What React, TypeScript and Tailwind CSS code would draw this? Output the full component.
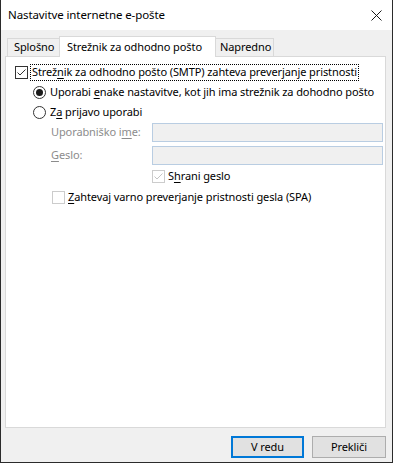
import React from 'react';

const font = { fontFamily: '"Segoe UI", "Noto Sans", sans-serif' };

function CheckBox({ checked, disabled }: { checked?: boolean; disabled?: boolean }) {
  return (
    <span
      className={`flex h-[13px] w-[13px] shrink-0 items-center justify-center border bg-white ${
        disabled ? 'border-[#cccccc]' : 'border-[#333333]'
      }`}
    >
      {checked && (
        <svg width="11" height="11" viewBox="0 0 11 11">
          <polyline
            points="1.5,5.5 4,8 9.5,2.5"
            fill="none"
            stroke={disabled ? '#c4c4c4' : '#333333'}
            strokeWidth="1"
          />
        </svg>
      )}
    </span>
  );
}

function Radio({ checked }: { checked?: boolean }) {
  return (
    <span className="flex h-[13px] w-[13px] shrink-0 items-center justify-center rounded-full border border-[#333333] bg-white">
      {checked && <span className="h-[7px] w-[7px] rounded-full bg-[#1a1a1a]" />}
    </span>
  );
}

export default function App() {
  return (
    <div
      className="flex h-[463px] w-[393px] flex-col whitespace-nowrap border-x border-b border-[#2b2b2b] bg-[#f0f0f0] text-[11px] tracking-[-0.1px] text-black"
      style={font}
    >
      {/* title bar */}
      <div className="flex h-[30px] shrink-0 items-center justify-between bg-white pl-[7px] pr-[9px]">
        <span className="text-[11.5px] text-black">Nastavitve internetne e-pošte</span>
        <svg width="11" height="11" viewBox="0 0 11 11" className="mr-[1px]">
          <path d="M0.5 0.5 L10.5 10.5 M10.5 0.5 L0.5 10.5" stroke="#1a1a1a" strokeWidth="1" />
        </svg>
      </div>

      <div className="flex flex-1 flex-col pl-[4px] pr-[6px]">
        {/* tabs */}
        <div className="mt-[6px] flex h-[20px] items-end pl-[2px]">
          <div className="flex h-[18px] w-[53px] items-center border border-b-0 border-[#d9d9d9] bg-[#f0f0f0] pl-[6px]">
            Splošno
          </div>
          <div className="relative z-10 -ml-px -mb-px flex h-[21px] w-[157px] items-start border border-b-0 border-[#d9d9d9] bg-white pl-[7px] pt-[2px]">
            Strežnik za odhodno pošto
          </div>
          <div className="-ml-px flex h-[18px] w-[59px] items-center border border-b-0 border-[#d9d9d9] bg-[#f0f0f0] pl-[4px]">
            Napredno
          </div>
        </div>

        {/* panel */}
        <div className="flex h-[372px] w-[381px] flex-col border border-[#d9d9d9] bg-white pt-[7px]">
          <div className="flex h-[17px] items-center pl-[9px]">
            <CheckBox checked />
            <span className="ml-[2px] flex h-[17px] items-center border border-dotted border-black px-[1px]">
              Strež<span className="underline underline-offset-2">n</span>ik za odhodno pošto (SMTP) zahteva preverjanje pristnosti
            </span>
          </div>

          <div className="mt-px flex h-[20px] items-center gap-[4px] pl-[27px]">
            <Radio checked />
            <span>
              Uporabi <span className="underline underline-offset-2">e</span>nake nastavitve, kot jih ima strežnik za dohodno pošto
            </span>
          </div>

          <div className="flex h-[20px] items-center gap-[4px] pl-[27px]">
            <Radio />
            <span>
              Z<span className="underline underline-offset-2">a</span> prijavo uporabi
            </span>
          </div>

          <div className="mt-px flex h-[19px] items-center pl-[45px]">
            <span className="w-[101px] text-[#8c8c8c]">
              Uporabniško i<span className="underline underline-offset-2">m</span>e:
            </span>
            <div className="h-[19px] w-[231px] border border-[#b9cde2] bg-[#f0f0f0]" />
          </div>

          <div className="mt-[4px] flex h-[19px] items-center pl-[45px]">
            <span className="w-[101px] text-[#8c8c8c]">
              <span className="underline underline-offset-2">G</span>eslo:
            </span>
            <div className="h-[19px] w-[231px] border border-[#b9cde2] bg-[#f0f0f0]" />
          </div>

          <div className="mt-px flex h-[21px] items-center gap-[3px] pl-[146px]">
            <CheckBox checked disabled />
            <span>
              S<span className="underline underline-offset-2">h</span>rani geslo
            </span>
          </div>

          <div className="flex h-[21px] items-center gap-[3px] pl-[46px]">
            <CheckBox disabled />
            <span>
              <span className="underline underline-offset-2">Z</span>ahtevaj varno preverjanje pristnosti gesla (SPA)
            </span>
          </div>
        </div>

        {/* buttons */}
        <div className="mt-[8px] flex justify-end gap-[8px] pr-0">
          <button className="flex h-[22px] w-[73px] items-center justify-center border-2 border-[#0078d7] bg-[#e1e1e1]">
            V redu
          </button>
          <button className="flex h-[22px] w-[74px] items-center justify-center border border-[#adadad] bg-[#e1e1e1]">
            Prekliči
          </button>
        </div>
      </div>
    </div>
  );
}
